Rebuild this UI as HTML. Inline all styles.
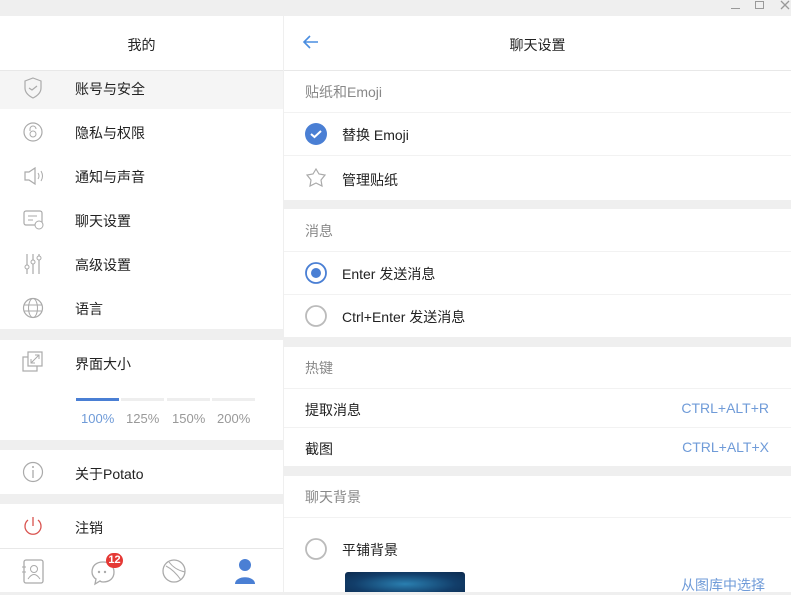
<!DOCTYPE html>
<html><head><meta charset="utf-8"><style>
*{margin:0;padding:0;box-sizing:border-box}
body{width:791px;height:592px;overflow:hidden;background:#efefef;font-family:"Liberation Sans","Noto Sans CJK SC",sans-serif;font-size:14px;color:#222;position:relative}
.abs{position:absolute}
.w{background:#fff}
.t{position:absolute;white-space:nowrap}
.g{color:#888}
.line{position:absolute;height:1px;background:#e8e8e8}
svg{position:absolute}
</style></head><body>
<div class="abs" style="left:731px;top:8px;width:9px;height:1px;background:#999"></div>
<div class="abs" style="left:755px;top:1px;width:9px;height:8px;border:1.5px solid #999"></div>
<svg style="left:780px;top:0" width="11" height="10"><path d="M1 1L9 9M9 1L1 9" stroke="#999" stroke-width="1.3"/></svg>

<div class="abs w" style="left:0;top:16px;width:283px;height:313px"></div>
<div class="abs" style="left:0;top:71px;width:283px;height:38px;background:#f5f5f5"></div>
<div class="t" style="left:0;width:283px;text-align:center;top:35px">我的</div>
<div class="line" style="left:0;top:70px;width:283px"></div>
<div class="t" style="left:75px;top:79px">账号与安全</div>
<div class="t" style="left:75px;top:123px">隐私与权限</div>
<div class="t" style="left:75px;top:167px">通知与声音</div>
<div class="t" style="left:75px;top:211px">聊天设置</div>
<div class="t" style="left:75px;top:255px">高级设置</div>
<div class="t" style="left:75px;top:299px">语言</div>
<svg style="left:23px;top:77px" width="20" height="22"><path d="M10 1L18 4V11C18 16 14 19 10 21C6 19 2 16 2 11V4Z" fill="none" stroke="#aaa" stroke-width="1.2"/><path d="M6 11L9 13L14 9" fill="none" stroke="#aaa" stroke-width="1.2"/></svg>
<svg style="left:23px;top:122px" width="20" height="20"><circle cx="10" cy="10" r="9" fill="none" stroke="#aaa" stroke-width="1.2"/><path d="M7 9V7a3 3 0 0 1 6 0" fill="none" stroke="#aaa"/><circle cx="10" cy="12" r="3" fill="none" stroke="#aaa"/></svg>
<svg style="left:23px;top:166px" width="22" height="20"><path d="M2 6H6L12 2V18L6 14H2Z" fill="none" stroke="#aaa" stroke-width="1.2"/><path d="M15 7Q17 10 15 13M18 5Q21 10 18 15" fill="none" stroke="#aaa"/></svg>
<svg style="left:23px;top:210px" width="22" height="20"><rect x="1" y="1" width="18" height="14" rx="2" fill="none" stroke="#aaa" stroke-width="1.2"/><path d="M5 6H14M5 10H10" stroke="#aaa"/><circle cx="16" cy="15" r="4" fill="#fff" stroke="#aaa"/></svg>
<svg style="left:23px;top:253px" width="20" height="22"><path d="M4 1V21M10 1V21M16 1V21" stroke="#aaa" stroke-width="1.2"/><circle cx="4" cy="14" r="2" fill="#fff" stroke="#aaa"/><circle cx="10" cy="9" r="2" fill="#fff" stroke="#aaa"/><circle cx="16" cy="5" r="2" fill="#fff" stroke="#aaa"/></svg>
<svg style="left:22px;top:297px" width="22" height="22"><circle cx="11" cy="11" r="9.5" fill="none" stroke="#aaa" stroke-width="1.2"/><ellipse cx="11" cy="11" rx="4.5" ry="9.5" fill="none" stroke="#aaa"/><path d="M2 8H20M2 14H20" stroke="#aaa"/></svg>

<div class="abs w" style="left:0;top:340px;width:283px;height:100px"></div>
<svg style="left:22px;top:351px" width="22" height="22"><rect x="1" y="6" width="14" height="14" fill="none" stroke="#aaa" stroke-width="1.2"/><rect x="6" y="1" width="14" height="14" fill="#fff" stroke="#aaa" stroke-width="1.2"/><path d="M9 12L17 4M13 4H17V8M9 8V12H13" fill="none" stroke="#aaa"/></svg>
<div class="t" style="left:75px;top:354px">界面大小</div>
<div class="abs" style="left:76px;top:398px;width:43px;height:3px;background:#4a7fd4"></div>
<div class="abs" style="left:121px;top:398px;width:43px;height:3px;background:#eee"></div>
<div class="abs" style="left:167px;top:398px;width:43px;height:3px;background:#eee"></div>
<div class="abs" style="left:212px;top:398px;width:43px;height:3px;background:#eee"></div>
<div class="t" style="left:81px;top:411px;font-size:13px;color:#6f9bd8">100%</div>
<div class="t" style="left:126px;top:411px;font-size:13px;color:#999">125%</div>
<div class="t" style="left:172px;top:411px;font-size:13px;color:#999">150%</div>
<div class="t" style="left:217px;top:411px;font-size:13px;color:#999">200%</div>

<div class="abs w" style="left:0;top:450px;width:283px;height:44px"></div>
<svg style="left:22px;top:461px" width="22" height="22"><circle cx="11" cy="11" r="9.5" fill="none" stroke="#aaa" stroke-width="1.2"/><path d="M11 9V17" stroke="#aaa" stroke-width="1.3"/><circle cx="11" cy="6" r="1" fill="#aaa"/></svg>
<div class="t" style="left:75px;top:464px">关于Potato</div>

<div class="abs w" style="left:0;top:504px;width:283px;height:88px"></div>
<svg style="left:22px;top:515px" width="22" height="22"><path d="M6 5A8 8 0 1 0 16 5" fill="none" stroke="#d9534f" stroke-width="1.3"/><path d="M11 2V11" stroke="#d9534f" stroke-width="1.3"/></svg>
<div class="t" style="left:75px;top:518px">注销</div>
<div class="line" style="left:0;top:548px;width:283px"></div>
<svg style="left:21px;top:559px" width="24" height="26"><rect x="3" y="1" width="19" height="23" rx="2" fill="none" stroke="#aaa" stroke-width="1.3"/><circle cx="13" cy="10" r="3.5" fill="none" stroke="#aaa"/><path d="M7 20Q13 11 19 20" fill="none" stroke="#aaa"/><path d="M1 8H5M1 13H5" stroke="#aaa"/></svg>
<svg style="left:90px;top:560px" width="26" height="26"><path d="M13 2C6 2 2 6 2 12C2 15 4 18 6 19L5 24L10 21C11 22 12 22 13 22C20 22 24 18 24 12C24 6 20 2 13 2Z" fill="none" stroke="#aaa" stroke-width="1.3"/><circle cx="9" cy="12" r="1.2" fill="#aaa"/><circle cx="15" cy="12" r="1.2" fill="#aaa"/></svg>
<div class="abs" style="left:106px;top:553px;width:17px;height:15px;border-radius:8px;background:#e53935;color:#fff;font-size:11px;font-weight:bold;text-align:center;line-height:15px">12</div>
<svg style="left:161px;top:558px" width="26" height="26"><circle cx="13" cy="13" r="11" fill="none" stroke="#aaa" stroke-width="1.3"/><path d="M5 8Q13 12 20 22M8 4Q14 12 24 14" fill="none" stroke="#aaa"/></svg>
<svg style="left:234px;top:558px" width="22" height="26"><circle cx="11" cy="7" r="6" fill="#4a7fd4"/><path d="M1 26C1 17 21 17 21 26Z" fill="#4a7fd4"/></svg>

<div class="abs w" style="left:284px;top:16px;width:507px;height:184px"></div>
<svg style="left:302px;top:34px" width="18" height="16"><path d="M16 8H2M8 2L2 8L8 14" fill="none" stroke="#4a8de0" stroke-width="1.6"/></svg>
<div class="t" style="left:284px;width:507px;text-align:center;top:35px">聊天设置</div>
<div class="line" style="left:284px;top:70px;width:507px"></div>
<div class="t g" style="left:305px;top:82px">贴纸和Emoji</div>
<div class="line" style="left:284px;top:112px;width:507px;background:#f2f2f2"></div>
<svg style="left:305px;top:123px" width="22" height="22"><circle cx="11" cy="11" r="11" fill="#4a7fd4"/><path d="M6 11L9.5 14L16 8" fill="none" stroke="#fff" stroke-width="2"/></svg>
<div class="t" style="left:342px;top:125px">替换 Emoji</div>
<div class="line" style="left:284px;top:155px;width:507px;background:#f2f2f2"></div>
<svg style="left:305px;top:167px" width="22" height="22"><path d="M11 2L14 7L20 8L16 13L17 19L11 16L5 19L6 13L2 8L8 7Z" fill="none" stroke="#aaa" stroke-width="1.2"/></svg>
<div class="t" style="left:342px;top:170px">管理贴纸</div>

<div class="abs w" style="left:284px;top:209px;width:507px;height:128px"></div>
<div class="t g" style="left:305px;top:221px">消息</div>
<div class="line" style="left:284px;top:251px;width:507px;background:#f2f2f2"></div>
<svg style="left:305px;top:262px" width="22" height="22"><circle cx="11" cy="11" r="10" fill="none" stroke="#4a7fd4" stroke-width="1.8"/><circle cx="11" cy="11" r="5" fill="#4a7fd4"/></svg>
<div class="t" style="left:342px;top:264px">Enter 发送消息</div>
<div class="line" style="left:284px;top:294px;width:507px;background:#f2f2f2"></div>
<svg style="left:305px;top:305px" width="22" height="22"><circle cx="11" cy="11" r="10" fill="none" stroke="#bbb" stroke-width="1.8"/></svg>
<div class="t" style="left:342px;top:307px">Ctrl+Enter 发送消息</div>

<div class="abs w" style="left:284px;top:347px;width:507px;height:119px"></div>
<div class="t g" style="left:305px;top:358px">热键</div>
<div class="line" style="left:284px;top:388px;width:507px;background:#f2f2f2"></div>
<div class="t" style="left:305px;top:400px">提取消息</div>
<div class="t" style="right:22px;top:400px;color:#6f9bd8">CTRL+ALT+R</div>
<div class="line" style="left:284px;top:427px;width:507px;background:#f2f2f2"></div>
<div class="t" style="left:305px;top:439px">截图</div>
<div class="t" style="right:22px;top:439px;color:#6f9bd8">CTRL+ALT+X</div>

<div class="abs w" style="left:284px;top:476px;width:507px;height:116px"></div>
<div class="t g" style="left:305px;top:487px">聊天背景</div>
<div class="line" style="left:284px;top:517px;width:507px;background:#f2f2f2"></div>
<svg style="left:305px;top:538px" width="22" height="22"><circle cx="11" cy="11" r="10" fill="none" stroke="#bbb" stroke-width="1.8"/></svg>
<div class="t" style="left:342px;top:540px">平铺背景</div>
<div class="abs" style="left:345px;top:572px;width:120px;height:20px;border-radius:3px 3px 0 0;background:radial-gradient(ellipse at 50% 60%,#2a7fb0,#123e6a 60%,#0c2a4e)"></div>
<div class="t" style="right:26px;top:575px;color:#6f9bd8">从图库中选择</div>
</body></html>
